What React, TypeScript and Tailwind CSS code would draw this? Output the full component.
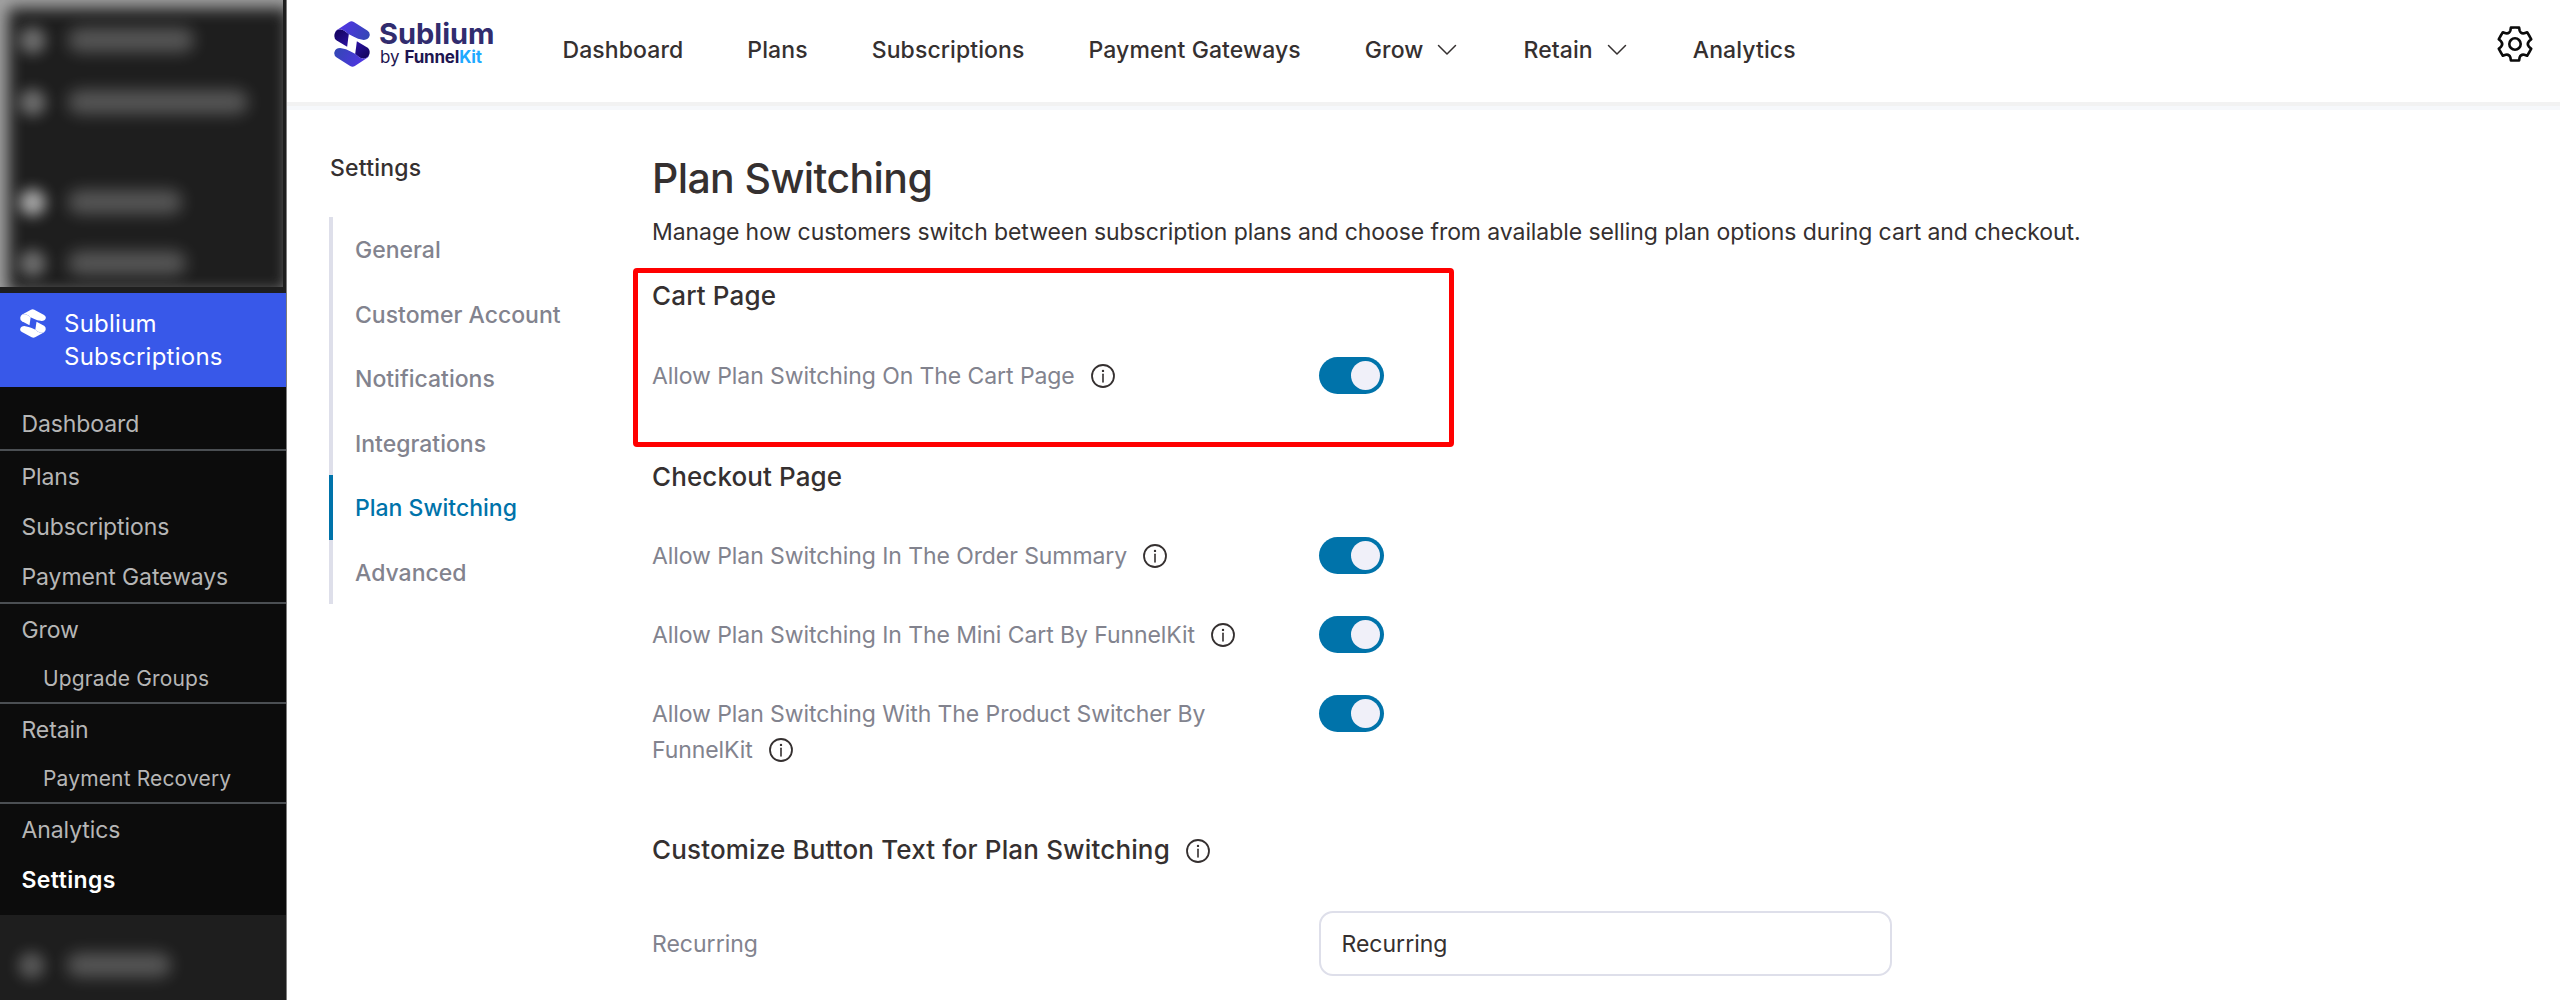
import { useState } from "react";
import clsx from "clsx";

const MENU = [
  [{ label: "Dashboard" }],
  [{ label: "Plans" }, { label: "Subscriptions" }, { label: "Payment Gateways" }],
  [{ label: "Grow" }, { label: "Upgrade Groups", child: true }],
  [{ label: "Retain" }, { label: "Payment Recovery", child: true }],
  [{ label: "Analytics" }, { label: "Settings", active: true }],
] as { label: string; child?: boolean; active?: boolean }[][];

const NAV = [
  { label: "Dashboard" },
  { label: "Plans" },
  { label: "Subscriptions" },
  { label: "Payment Gateways" },
  { label: "Grow", dropdown: true },
  { label: "Retain", dropdown: true },
  { label: "Analytics" },
];

const TABS = ["General", "Customer Account", "Notifications", "Integrations", "Plan Switching", "Advanced"];

const CHECKOUT_OPTIONS = [
  "Allow Plan Switching In The Order Summary",
  "Allow Plan Switching In The Mini Cart By FunnelKit",
  "Allow Plan Switching With The Product Switcher By FunnelKit",
];

const BAND =
  "M31 70 C32 63 36 60 40 57 L74 35 Q81 31 88 35 L128 60 Q137 66 135 76 Q131 90 114 88 Q100 86 88 79 L72 71 Q62 60 52 57 Q36 56 31 70 Z";
const FOLD = "M30 73 Q34 55 51 57 Q60 59 73 71 L68 109 L37 90 Q29 85 30 73 Z";

function LogoMark() {
  return (
    <svg viewBox="29 32 107 137" className="h-[46px] w-[36px] shrink-0" fill="none">
      <defs>
        <linearGradient id="band" x1="40" y1="40" x2="130" y2="90" gradientUnits="userSpaceOnUse">
          <stop stopColor="#5333e8" />
          <stop offset="1" stopColor="#3347b4" />
        </linearGradient>
        <linearGradient id="fold" x1="35" y1="60" x2="70" y2="105" gradientUnits="userSpaceOnUse">
          <stop stopColor="#13035c" />
          <stop offset="1" stopColor="#2a11a0" />
        </linearGradient>
      </defs>
      <path d={FOLD} fill="url(#fold)" />
      <path d={BAND} fill="url(#band)" />
      <g transform="rotate(180 82.5 100.5)">
        <path d={FOLD} fill="url(#fold)" />
        <path d={BAND} fill="url(#band)" />
      </g>
    </svg>
  );
}

function MenuMark() {
  return (
    <svg viewBox="29 32 107 137" preserveAspectRatio="none" className="h-[29px] w-[26px] shrink-0" fill="#fff">
      <path d={FOLD} />
      <path d={BAND} />
      <g transform="rotate(180 82.5 100.5)">
        <path d={FOLD} />
        <path d={BAND} />
      </g>
    </svg>
  );
}

function polar(r: number, deg: number) {
  const a = ((deg - 90) * Math.PI) / 180;
  return `${(r * Math.cos(a)).toFixed(2)} ${(r * Math.sin(a)).toFixed(2)}`;
}

function GearIcon() {
  // six teeth, one every 60 degrees
  const d = [0, 60, 120, 180, 240, 300]
    .map((t, i) => {
      const start = `${i ? "L" : "M"}${polar(16.9, t - 14)}`;
      return `${start} Q${polar(16.6, t)} ${polar(16.9, t + 14)} L${polar(14.2, t + 19)} Q${polar(11.6, t + 30)} ${polar(14.2, t + 41)}`;
    })
    .join(" ");
  return (
    <svg viewBox="-18 -18 36 36" className="size-[36px]" fill="none" stroke="#0b0b0b" strokeWidth="2.6" strokeLinejoin="round">
      <path d={`${d} Z`} />
      <circle r="5.7" />
    </svg>
  );
}

function ChevronIcon() {
  return (
    <svg viewBox="0 0 20 12" className="mr-[2px] ml-[14px] h-[12px] w-[20px]" fill="none" stroke="#353030" strokeWidth="1.5" strokeLinecap="round" strokeLinejoin="round">
      <path d="M1.5 1.5 L10 10 L18.5 1.5" />
    </svg>
  );
}

function InfoIcon() {
  return (
    <svg viewBox="0 0 24 24" className="ml-[16px] inline-block size-[24px] align-[-4px]" fill="none" stroke="#353030" strokeWidth="1.8">
      <circle cx="12" cy="12" r="11" />
      <path d="M12 10.2 V18" strokeLinecap="round" strokeWidth="1.6" />
      <circle cx="12" cy="6.9" r="1.2" fill="#353030" stroke="none" />
    </svg>
  );
}

function Toggle() {
  const [on, setOn] = useState(true);
  return (
    <button
      role="switch"
      aria-checked={on}
      onClick={() => setOn(!on)}
      className={clsx(
        "-mt-px flex h-[37px] w-[65px] shrink-0 items-center rounded-full px-[4px]",
        on ? "justify-end bg-[#0073aa]" : "justify-start bg-[#82838e]"
      )}
    >
      <span className="size-[29px] rounded-full bg-[#f0f0f9]" />
    </button>
  );
}

function OptionRow({ label }: { label: string }) {
  return (
    <div className="flex items-start">
      <div className="w-[666.5px]">
        <p className="max-w-[600px] text-[23px] leading-[36px] tracking-[-0.08px] text-[#82838e]">
          {label}
          <InfoIcon />
        </p>
      </div>
      <Toggle />
    </div>
  );
}

function Smudge({ dot, bar }: { dot: string; bar: string }) {
  return (
    <div className="flex h-[40px] items-center gap-[22px]">
      <span className={clsx("size-[27px] rounded-full blur-[7px]", dot)} />
      <span className={clsx("h-[24px] rounded-full bg-white/25 blur-[8px]", bar)} />
    </div>
  );
}

function Sidebar() {
  return (
    <aside className="flex w-[287px] shrink-0 flex-col border-r border-[#7d7d7d] bg-[#1e1e1e]">
      <div className="h-[293px]">
        <div className="h-[287px] w-[283px] overflow-hidden pt-[20px] pl-[19px] shadow-[inset_7px_7px_16px_1px_rgba(190,190,190,0.85)]">
          <Smudge dot="bg-white/35" bar="w-[126px]" />
          <div className="mt-[22px]"><Smudge dot="bg-white/35" bar="w-[180px]" /></div>
          <div className="mt-[60px]"><Smudge dot="bg-white/60" bar="w-[114px]" /></div>
          <div className="mt-[21px]"><Smudge dot="bg-white/35" bar="w-[118px]" /></div>
        </div>
      </div>

      <div className="flex h-[94px] items-start gap-[18.5px] bg-[#3858e9] pt-[14px] pl-[19.5px] text-[24px] leading-[33.3px] tracking-[0.25px] text-white">
        <div className="pt-[2px]"><MenuMark /></div>
        <div>Sublium<br />Subscriptions</div>
      </div>

      <nav className="bg-[#0c0c0c] pt-[12px] pb-[10px]">
        {MENU.map((group, g) => (
          <div key={g} className={clsx(g > 0 && "border-t-2 border-[#4b4f53] pt-px")}>
            {group.map((item) => (
              <div
                key={item.label}
                className={clsx(
                  "flex items-center",
                  item.child ? "h-[47px] pl-[43px] text-[21px] tracking-[0.15px]" : "h-[50px] pl-[21.5px] text-[23px]",
                  item.active ? "pt-px font-semibold tracking-[0.4px] text-white" : "text-[#b6b6b6]",
                  !item.child && !item.active && "tracking-[-0.1px]"
                )}
              >
                {item.label}
              </div>
            ))}
          </div>
        ))}
      </nav>

      <div className="flex-1 overflow-hidden pt-[30px] pl-[18px]">
        <Smudge dot="bg-white/25" bar="w-[104px]" />
      </div>
    </aside>
  );
}

function Header() {
  return (
    <header>
      <div className="flex h-[102px] items-start bg-white pl-[47px]">
        <div className="flex w-[228.5px] items-start gap-[8px] pt-[20.5px]">
          <LogoMark />
          <div className="flex flex-col pl-[1px]">
            <span className="h-[25px] text-[29px] leading-[25px] font-bold text-[#312c6e]">Sublium</span>
            <span className="h-[24px] pl-px text-[17px] leading-[23px] whitespace-nowrap text-[#1d1550]">
              by <b className="font-bold tracking-[-0.2px]">Funnel<span className="font-bold text-[#1fa9ff]">Kit</span></b>
            </span>
          </div>
        </div>
        <nav className="flex flex-1 items-center gap-[64px] pt-[32px] text-[23px] leading-[36px] font-medium tracking-[0.1px] text-[#353030]">
          {NAV.map((item) => (
            <a key={item.label} className="flex items-center">
              {item.label}
              {item.dropdown && <ChevronIcon />}
            </a>
          ))}
        </nav>
        <div className="pt-[26px] pr-[27px]">
          <GearIcon />
        </div>
      </div>
      <div className="h-[4px] bg-[#f2f2f2]" />
      <div className="h-[4px] bg-[#f6f8fb]" />
    </header>
  );
}

export default function App() {
  const [tab, setTab] = useState("Plan Switching");

  return (
    <div className="flex h-[1000px] w-[2560px] overflow-hidden bg-white font-['Inter',sans-serif]">
      <Sidebar />
      <div className="flex-1">
        <Header />
        <div className="flex pl-[42px]">
          <div className="w-[323px] pt-[40px]">
            <h2 className="pl-px text-[23px] leading-[36px] font-medium tracking-[0.2px] text-[#353030]">Settings</h2>
            <ul className="mt-[31px]">
              {TABS.map((t) => (
                <li
                  key={t}
                  onClick={() => setTab(t)}
                  className={clsx(
                    "flex h-[64.5px] items-center border-l-[4px] pt-[2px] pl-[22px] text-[23px] font-medium",
                    t === tab ? "border-[#0073aa] text-[#0073aa]" : "border-[#dedfea] text-[#82838e]"
                  )}
                >
                  {t}
                </li>
              ))}
            </ul>
          </div>

          <main className="pt-[42px] text-[#353030]">
            <h1 className="text-[41px] leading-[52px] font-medium tracking-[-0.6px]">Plan Switching</h1>
            <p className="mt-[10px] text-[23px] leading-[36px] tracking-[-0.08px] whitespace-nowrap">
              Manage how customers switch between subscription plans and choose from available selling plan options during cart and checkout.
            </p>

            <section className="relative mt-[28px]">
              <h3 className="text-[26px] leading-[36px] font-medium tracking-[0.15px]">Cart Page</h3>
              <div className="mt-[44px]">
                <OptionRow label="Allow Plan Switching On The Cart Page" />
              </div>
              {/* callout frame around the cart option */}
              <div className="pointer-events-none absolute -top-[10px] -left-[19px] h-[179px] w-[821px] rounded-[4px] border-[5px] border-[#ff0000]" />
            </section>

            <section className="mt-[65px]">
              <h3 className="text-[26px] leading-[36px] font-medium tracking-[0.1px]">Checkout Page</h3>
              <div className="mt-[43px] flex flex-col gap-[43px]">
                {CHECKOUT_OPTIONS.map((label) => <OptionRow key={label} label={label} />)}
              </div>
            </section>

            <section className="mt-[64px]">
              <h3 className="text-[26px] leading-[36px] font-medium tracking-[0.15px]">
                Customize Button Text for Plan Switching
                <InfoIcon />
              </h3>
              <div className="mt-[43px] flex items-center text-[23px]">
                <label className="w-[666.5px] pt-[2px] text-[#82838e]">Recurring</label>
                <input
                  defaultValue="Recurring"
                  className="h-[65px] w-[573px] rounded-[14px] border-2 border-[#dedfea] px-[21px] pt-px text-[#353030] outline-none"
                />
              </div>
            </section>
          </main>
        </div>
      </div>
    </div>
  );
}
